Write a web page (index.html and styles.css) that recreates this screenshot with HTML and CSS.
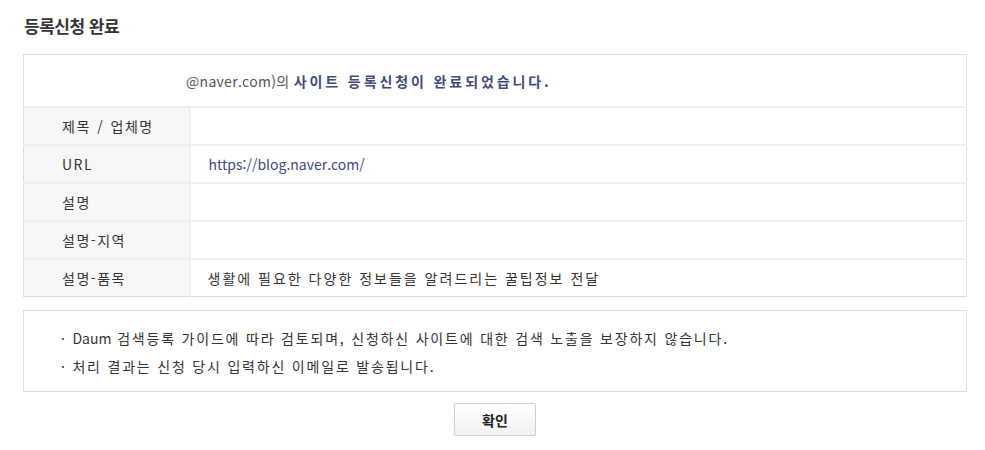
FILE: index.html
```html
<!DOCTYPE html>
<html lang="ko">
<head>
  <meta charset="UTF-8" />
  <title>등록신청 완료</title>
  <link rel="stylesheet" href="styles.css">
</head>
<body>
  <div class="wrap">
    <h2>등록신청 완료</h2>

    <table class="result">
      <tr>
        <td colspan="2" class="msg">@naver.com)의 <strong>사이트 등록신청이 완료되었습니다.</strong></td>
      </tr>
      <tr>
        <th>제목 / 업체명</th>
        <td></td>
      </tr>
      <tr>
        <th>URL</th>
        <td class="url">https://blog.naver.com/</td>
      </tr>
      <tr>
        <th>설명</th>
        <td></td>
      </tr>
      <tr>
        <th>설명-지역</th>
        <td></td>
      </tr>
      <tr>
        <th>설명-품목</th>
        <td class="desc">생활에 필요한 다양한 정보들을 알려드리는 꿀팁정보 전달</td>
      </tr>
    </table>

    <div class="notice">
      <p>· <span class="en">Daum</span> 검색등록 가이드에 따라 검토되며, 신청하신 사이트에 대한 검색 노출을 보장하지 않습니다.</p>
      <p>· 처리 결과는 신청 당시 입력하신 이메일로 발송됩니다.</p>
    </div>

    <div class="btns">
      <button type="button">확인</button>
    </div>
  </div>
</body>
</html>
```

FILE: styles.css
```css
* {
  box-sizing: border-box;
}

body {
  margin: 0;
  background: #fff;
  font-family: "Noto Sans CJK KR", "Noto Sans", sans-serif;
  color: #333;
}

.wrap {
  padding: 14px 19px 0 23px;
}

h2 {
  margin: 0 0 16px 1px;
  font-size: 17px;
  font-weight: 700;
  line-height: 24px;
  color: #333;
  letter-spacing: -0.5px;
}

/* result table */
.result {
  width: 944px;
  border-collapse: collapse;
  border: 1px solid #dcdcdc;
  font-size: 14px;
}

.result th,
.result td {
  height: 38px;
  padding: 0;
  border-top: 2px solid #efefef;
  text-align: left;
  font-weight: 400;
  line-height: 20px;
}

.result th {
  width: 166px;
  padding-left: 38px;
  background: #f7f7f7;
  border-right: 2px solid #efefef;
  color: #333;
  letter-spacing: 1.5px;
  word-spacing: 1px;
}

.result td {
  padding-left: 19px;
}

.result .msg {
  height: 52px;
  padding: 2px 0 0 162px;
  border-top: none;
  color: #555;
  font-size: 14px;
  letter-spacing: 0.3px;
}

.msg strong {
  color: #3f4a7e;
  font-weight: 700;
  letter-spacing: 2.9px;
}

.result .url {
  padding-left: 18px;
  color: #3d4a7f;
}

.result .desc {
  padding-left: 17px;
  color: #333;
  letter-spacing: 2px;
}

/* notice box */
.notice {
  width: 944px;
  margin-top: 13px;
  padding: 13px 0 11px 37px;
  border: 1px solid #dcdcdc;
  font-size: 14px;
  color: #333;
}

.notice p {
  margin: 0;
  line-height: 28px;
  letter-spacing: 1.8px;
}

.notice .en {
  letter-spacing: 0;
}

.btns {
  width: 944px;
  padding-top: 11px;
  text-align: center;
}

.btns button {
  width: 82px;
  height: 33px;
  border: 1px solid #cfcfcf;
  border-radius: 2px;
  background: linear-gradient(#fff, #f1f1f1);
  box-shadow: 0 1px 1px rgba(0, 0, 0, 0.12);
  font-family: inherit;
  font-size: 14px;
  font-weight: 700;
  color: #222;
  cursor: pointer;
}
```
